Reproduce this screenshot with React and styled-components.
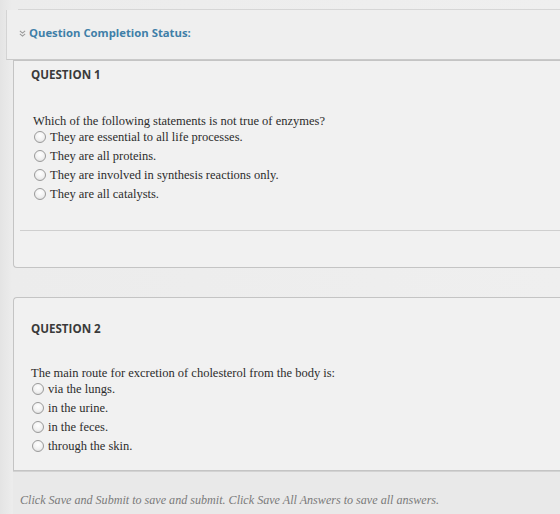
import React from "react";
import styled, { createGlobalStyle } from "styled-components";

const Global = createGlobalStyle`
  html, body { margin: 0; padding: 0; background: #e7e7e7; }
  body { width: 560px; height: 514px; overflow: hidden; }
`;

const Page = styled.div`
  display: flex;
  flex-direction: column;
  width: 560px;
  height: 514px;
  background: linear-gradient(90deg, #e4e4e4 0px, #ececec 12px, #efefef 100%);
`;

const PrevPanel = styled.div`
  height: 9px;
  margin-left: 18px;
  border-bottom: 1px solid #d6d6d6;
`;

const StatusPanel = styled.div`
  height: 50px;
  margin-left: 6px;
  display: flex;
  align-items: center;
  gap: 3px;
  padding: 0 0 5px 12px;
  background: #efefef;
  border-left: 1px solid #d4d4d4;
  border-bottom: 1px solid #c9c9c9;
  box-sizing: border-box;
`;

const Chevron = styled.svg`
  width: 7px;
  height: 7px;
  margin-top: 2px;
`;

const StatusTitle = styled.span`
  font-family: "Open Sans", sans-serif;
  font-weight: 700;
  font-size: 11.3px;
  color: #3f7fa8;
`;

const Card = styled.div`
  margin-left: 13px;
  margin-top: ${(p) => p.$top || 0}px;
  height: ${(p) => p.$height}px;
  box-sizing: border-box;
  background: #f1f1f1;
  border: 1px solid #c4c4c4;
  border-right: none;
  border-radius: ${(p) => p.$radius || "0 0 0 4px"};
  display: flex;
  flex-direction: column;
`;

const Heading = styled.div`
  font-family: "Open Sans", sans-serif;
  font-weight: 700;
  font-size: 11.6px;
  color: #3a3a3a;
  padding-left: ${(p) => p.$indent}px;
  margin-top: ${(p) => p.$top}px;
  line-height: 16px;
`;

const QText = styled.div`
  font-family: "Liberation Serif", serif;
  font-size: 12.5px;
  color: #2c2c2c;
  padding-left: ${(p) => p.$indent}px;
  margin-top: ${(p) => p.$top}px;
  line-height: 16px;
`;

const Options = styled.div`
  display: flex;
  flex-direction: column;
  gap: 3px;
  padding-left: ${(p) => p.$indent}px;
`;

const Option = styled.label`
  display: flex;
  align-items: center;
  gap: 4px;
  height: 16px;
  font-family: "Liberation Serif", serif;
  font-size: 12.5px;
  color: #2c2c2c;
`;

const Radio = styled.span`
  width: 12px;
  height: 12px;
  border-radius: 50%;
  border: 1px solid #9a9a9a;
  background: radial-gradient(circle at 50% 35%, #ffffff 0%, #f1f1f1 55%, #d6d6d6 100%);
  box-sizing: border-box;
  flex: none;
`;

const Divider = styled.div`
  margin-top: ${(p) => p.$top}px;
  margin-left: 6px;
  border-top: 1px solid #cfcfcf;
`;

const Footer = styled.div`
  margin-left: 13px;
  border-top: 1px solid #d2d2d2;
  background: #e9e9e9;
  flex: 1;
  display: flex;
  align-items: flex-end;
  padding: 0 0 6px 7px;
  font-family: "Liberation Serif", serif;
  font-style: italic;
  font-size: 12.1px;
  color: #7a7a7a;
`;

const q1 = [
  "They are essential to all life processes.",
  "They are all proteins.",
  "They are involved in synthesis reactions only.",
  "They are all catalysts.",
];
const q2 = ["via the lungs.", "in the urine.", "in the feces.", "through the skin."];

export default function App() {
  return (
    <>
      <Global />
      <Page>
        <PrevPanel />
        <StatusPanel>
          <Chevron viewBox="0 0 8 8">
            <path d="M1 1l3 2.5L7 1M1 4.5L4 7l3-2.5" fill="none" stroke="#9a9a9a" strokeWidth="1.3" />
          </Chevron>
          <StatusTitle>Question Completion Status:</StatusTitle>
        </StatusPanel>
        <Card $height={208}>
          <Heading $indent={17} $top={6}>QUESTION 1</Heading>
          <QText $indent={19} $top={30}>Which of the following statements is not true of enzymes?</QText>
          <Options $indent={20}>
            {q1.map((t) => (
              <Option key={t}>
                <Radio />
                {t}
              </Option>
            ))}
          </Options>
          <Divider $top={28} />
        </Card>
        <Card $top={29} $height={174} $radius="4px 0 0 0">
          <Heading $indent={17} $top={23}>QUESTION 2</Heading>
          <QText $indent={17} $top={28}>The main route for excretion of cholesterol from the body is:</QText>
          <Options $indent={18}>
            {q2.map((t) => (
              <Option key={t}>
                <Radio />
                {t}
              </Option>
            ))}
          </Options>
        </Card>
        <Footer>
          Click Save and Submit to save and submit. Click Save All Answers to save all answers.
        </Footer>
      </Page>
    </>
  );
}
